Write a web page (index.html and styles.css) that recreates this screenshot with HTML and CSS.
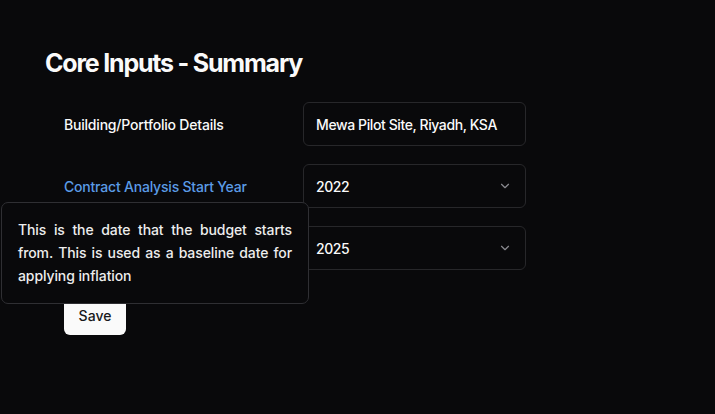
FILE: index.html
```html
<!DOCTYPE html>
<html lang="en">
<head>
<meta charset="utf-8">
<link rel="stylesheet" href="styles.css">
</head>
<body>
<main class="page">
  <h1 class="title">Core Inputs - Summary</h1>
  <form class="form">
    <div class="row">
      <label class="label">Building/Portfolio Details</label>
      <div class="field"><span class="value">Mewa Pilot Site, Riyadh, KSA</span></div>
    </div>
    <div class="row">
      <label class="label label-link">Contract Analysis Start Year</label>
      <div class="field select"><span class="value">2022</span>
        <svg class="chev" viewBox="0 0 24 24" width="14" height="14"><path d="M6 9l6 6 6-6" fill="none" stroke="currentColor" stroke-width="2" stroke-linecap="round" stroke-linejoin="round"/></svg>
      </div>
    </div>
    <div class="row">
      <label class="label" aria-label="Contract Analysis End Year"></label>
      <div class="field select"><span class="value">2025</span>
        <svg class="chev" viewBox="0 0 24 24" width="14" height="14"><path d="M6 9l6 6 6-6" fill="none" stroke="currentColor" stroke-width="2" stroke-linecap="round" stroke-linejoin="round"/></svg>
      </div>
    </div>
    <div class="actions">
      <button type="button" class="btn">Save</button>
    </div>
  </form>
  <div class="tooltip">This is the date that the budget starts from. This is used as a baseline date for applying inflation</div>
</main>
</body>
</html>
```
FILE: styles.css
```css
html, body {
  margin: 0;
  padding: 0;
  background: #09090b;
  height: 100%;
}
body {
  font-family: Inter, "Noto Sans", sans-serif;
  color: #fafafa;
}
.page {
  position: relative;
  padding: 47px 0 0 45px;
}
.title {
  margin: 0;
  font-size: 25px;
  font-weight: 700;
  letter-spacing: -1.2px;
  line-height: 32px;
}
.form {
  display: flex;
  flex-direction: column;
  gap: 18px;
  padding: 23px 0 0 19px;
}
.row {
  display: flex;
  align-items: center;
}
.label {
  width: 239px;
  font-size: 14px;
  font-weight: 500;
  color: #fafafa;
  letter-spacing: -0.2px;
}
.label-link {
  color: #5b9be6;
}
.field {
  box-sizing: border-box;
  width: 223px;
  height: 44px;
  border: 1px solid #27272a;
  border-radius: 6px;
  display: flex;
  align-items: center;
  justify-content: space-between;
  padding: 0 13px 0 12px;
  font-size: 14px;
  font-weight: 500;
  letter-spacing: -0.4px;
}
.chev {
  color: #8a8a90;
}
.actions {
  padding-top: 7px;
}
.btn {
  font-family: Inter, "Noto Sans", sans-serif;
  background: #fafafa;
  color: #18181b;
  border: none;
  border-radius: 6px;
  height: 40px;
  width: 62px;
  font-size: 14px;
  font-weight: 500;
  cursor: pointer;
}
.tooltip {
  position: absolute;
  left: 1px;
  top: 202px;
  box-sizing: border-box;
  width: 308px;
  height: 102px;
  padding: 15px 16px;
  background: #09090b;
  border: 1px solid #2f2f33;
  border-radius: 7px;
  font-size: 14px;
  line-height: 23px;
  font-weight: 500;
  text-align: justify;
  color: #ededed;
  letter-spacing: -0.1px;
}
```
